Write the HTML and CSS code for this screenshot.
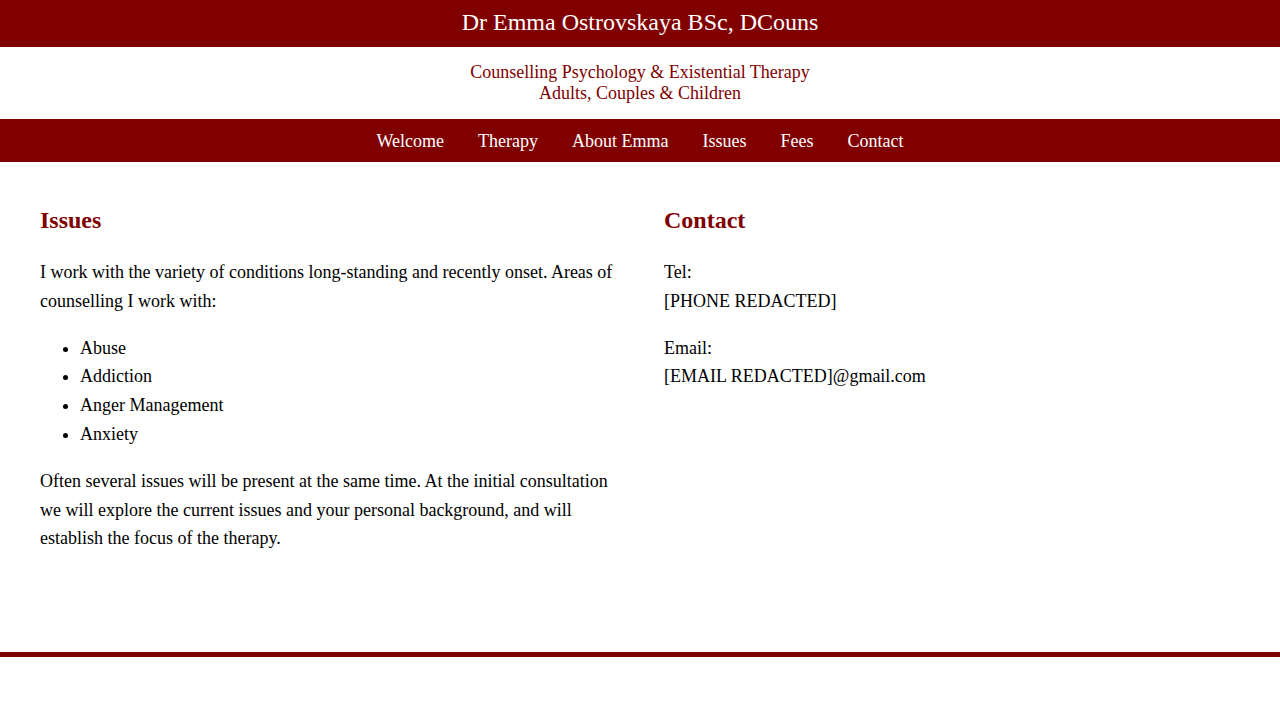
FILE: index.html
```html
<!DOCTYPE html>
<html lang="en">
<head>
<meta charset="utf-8">
<title>Dr Emma Ostrovskaya</title>
<link rel="stylesheet" href="styles.css">
</head>
<body>
<header class="top">Dr Emma Ostrovskaya BSc, DCouns</header>
<div class="tagline">
  <div>Counselling Psychology &amp; Existential Therapy</div>
  <div>Adults, Couples &amp; Children</div>
</div>
<nav class="nav">
  <a href="#">Welcome</a>
  <a href="#">Therapy</a>
  <a href="#">About Emma</a>
  <a href="#">Issues</a>
  <a href="#">Fees</a>
  <a href="#">Contact</a>
</nav>
<main class="main">
  <section class="col">
    <h2 class="heading">Issues</h2>
    <p>I work with the variety of conditions long-standing and recently onset. Areas of counselling I work with:</p>
    <ul class="list">
      <li>Abuse</li>
      <li>Addiction</li>
      <li>Anger Management</li>
      <li>Anxiety</li>
    </ul>
    <p>Often several issues will be present at the same time. At the initial consultation we will explore the current issues and your personal background, and will establish the focus of the therapy.</p>
  </section>
  <section class="col">
    <h2 class="heading">Contact</h2>
    <p>Tel:<br>[PHONE REDACTED]</p>
    <p>Email:<br>[EMAIL REDACTED]@gmail.com</p>
  </section>
</main>
<footer class="footer"></footer>
</body>
</html>
```
FILE: styles.css
```css
html, body {
  margin: 0;
  padding: 0;
  background: #ffffff;
}
body {
  font-family: "Liberation Serif", "Times New Roman", serif;
  color: #000000;
}
.top {
  height: 47px;
  background: #800000;
  color: #ffffff;
  font-size: 24px;
  display: flex;
  align-items: center;
  justify-content: center;
  padding-bottom: 2px;
  box-sizing: border-box;
}
.tagline {
  padding: 15px 0 15px;
  text-align: center;
  color: #800000;
  font-size: 18px;
  line-height: 21px;
}
.nav {
  background: #800000;
  display: flex;
  justify-content: center;
}
.nav a {
  color: #ffffff;
  text-decoration: none;
  font-size: 18px;
  line-height: 21px;
  padding: 12px 17px 10px;
}
.main {
  display: grid;
  grid-template-columns: 1fr 1fr;
  padding: 24px 16px 81px;
}
.col {
  padding: 0 24px;
  font-size: 18px;
  line-height: 28.8px;
}
.heading {
  color: #800000;
  font-size: 24px;
  line-height: 28px;
  font-weight: bold;
  margin: 20px 0 24px;
}
.col p {
  margin: 18px 0;
}
.heading + p {
  margin-top: 0;
}
.list {
  margin: 18px 0;
  padding-left: 40px;
}
.footer {
  border-top: 5px solid #800000;
}
```
